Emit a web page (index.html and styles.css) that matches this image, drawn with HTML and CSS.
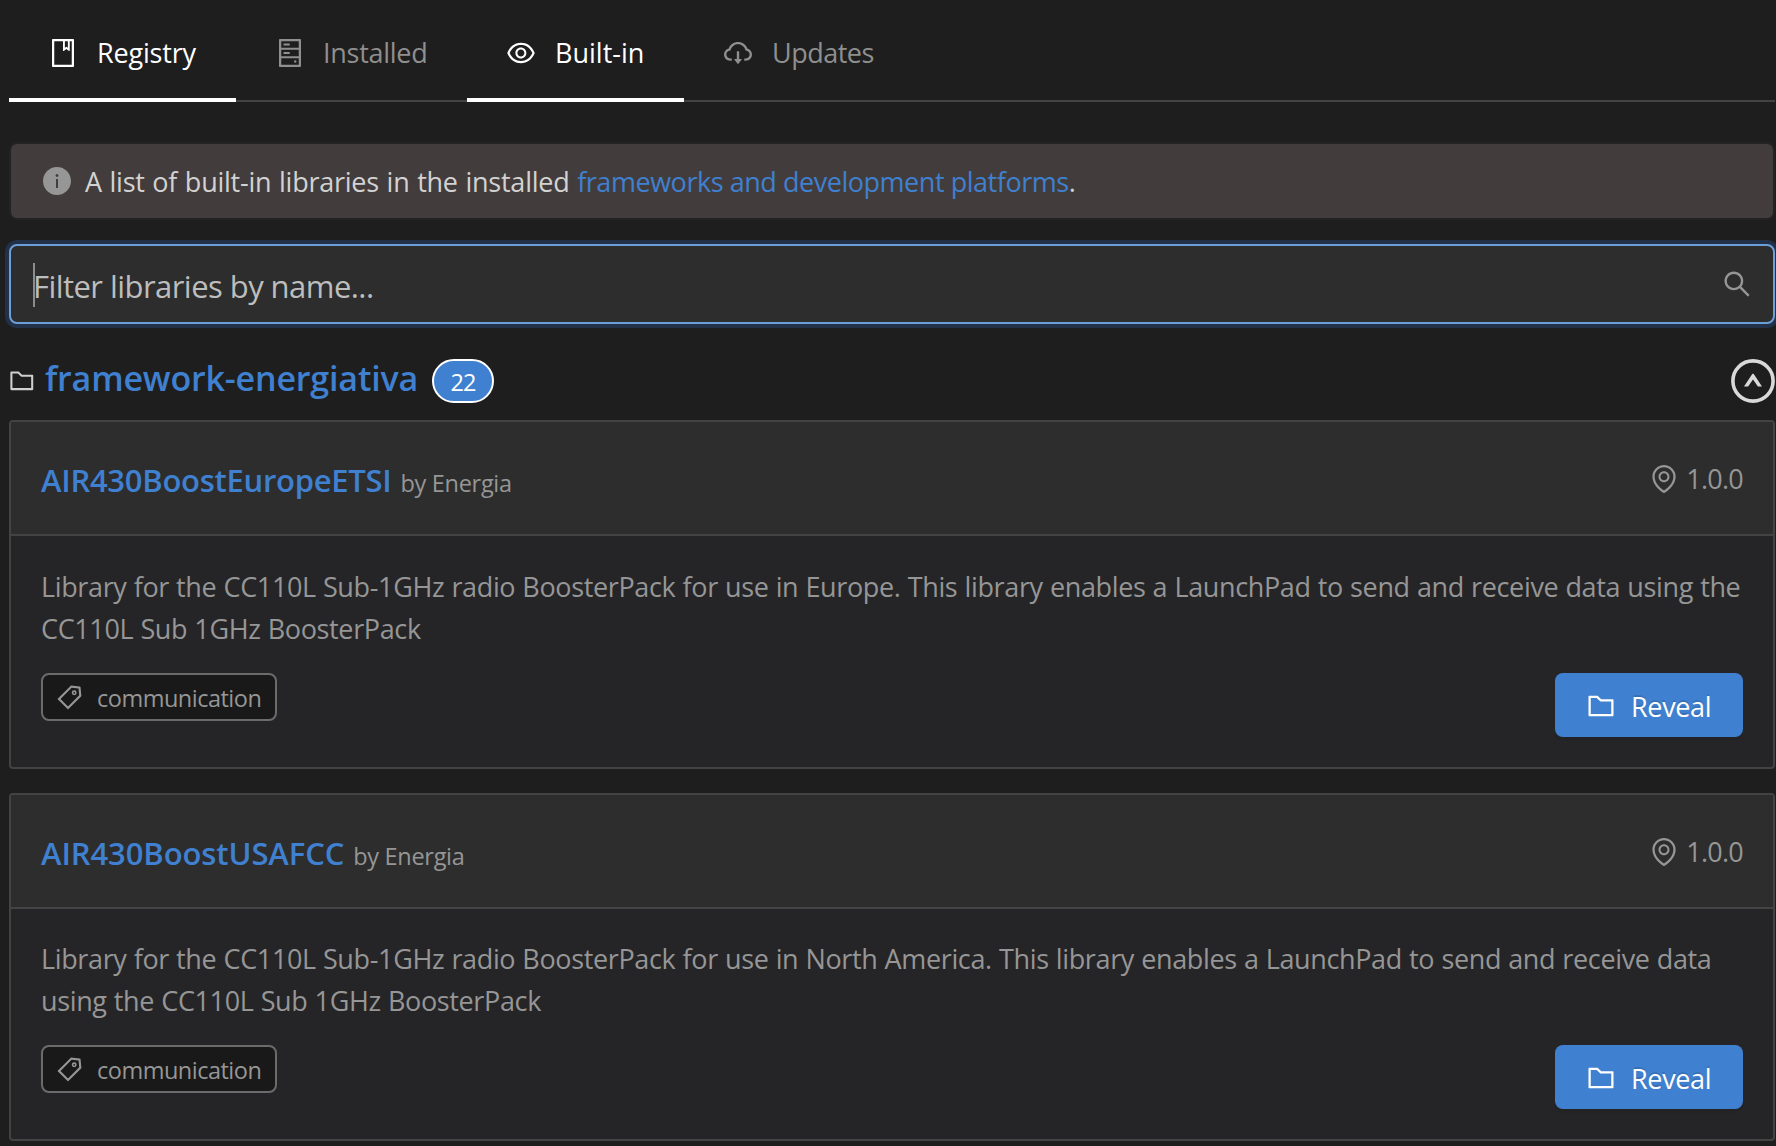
FILE: index.html
```
<!DOCTYPE html>
<html lang="en">
<head>
<meta charset="utf-8">
<title>Libraries</title>
<link rel="stylesheet" href="styles.css">
</head>
<body>
<svg class="defs" aria-hidden="true">
  <symbol id="book" viewBox="64 64 896 896"><path d="M832 64H192c-17.700 0-32 14.300-32 32v832c0 17.700 14.300 32 32 32h640c17.700 0 32-14.300 32-32V96c0-17.700-14.300-32-32-32zm-260 72h96v209.900L621.500 312 572 347.400V136zm220 752H232V136h280v296.900c0 3.300 1 6.600 3 9.300a15.900 15.900 0 0 0 22.300 3.700l83.800-59.900 81.400 59.400c2.700 2 6 3.100 9.400 3.100 8.800 0 16-7.200 16-16V136h64v752z"/></symbol>
  <symbol id="hdd" viewBox="64 64 896 896"><path d="M832 64H192c-17.700 0-32 14.300-32 32v832c0 17.700 14.300 32 32 32h640c17.700 0 32-14.300 32-32V96c0-17.700-14.300-32-32-32zm-600 72h560v208H232V136zm560 480H232V408h560v208zm0 272H232V680h560v208zM496 208H312c-4.400 0-8 3.600-8 8v48c0 4.400 3.600 8 8 8h184c4.400 0 8-3.600 8-8v-48c0-4.400-3.600-8-8-8zM312 544h184c4.400 0 8-3.600 8-8v-48c0-4.400-3.600-8-8-8H312c-4.400 0-8 3.600-8 8v48c0 4.400 3.600 8 8 8zm328 240a40 40 0 1 0 80 0 40 40 0 1 0-80 0z"/></symbol>
  <symbol id="eye" viewBox="64 64 896 896"><path d="M942.200 486.200C847.400 286.500 704.100 186 512 186c-192.200 0-335.400 100.500-430.200 300.300a60.300 60.300 0 0 0 0 51.500C176.600 737.500 319.900 838 512 838c192.200 0 335.400-100.500 430.200-300.300 7.700-16.200 7.700-35 0-51.500zM512 766c-161.300 0-279.400-81.800-362.700-254C232.600 339.800 350.700 258 512 258c161.300 0 279.400 81.800 362.700 254C791.500 684.200 673.400 766 512 766zm-4-430c-97.200 0-176 78.800-176 176s78.800 176 176 176 176-78.800 176-176-78.800-176-176-176zm0 288c-61.900 0-112-50.100-112-112s50.100-112 112-112 112 50.100 112 112-50.100 112-112 112z"/></symbol>
  <symbol id="cloud" viewBox="64 64 896 896"><path d="M624 706.300h-74.100V464c0-4.400-3.600-8-8-8h-60c-4.400 0-8 3.600-8 8v242.300H400c-6.700 0-10.400 7.700-6.300 12.900l112 141.700a8 8 0 0 0 12.600 0l112-141.700c4.100-5.200.4-12.900-6.300-12.900z"/><path d="M811.400 366.700C765.600 245.900 648.900 160 512.200 160S258.800 245.800 213 366.600C127.300 389.100 64 467.200 64 560c0 110.500 89.500 200 199.900 200H304c4.400 0 8-3.600 8-8v-60c0-4.400-3.600-8-8-8h-40.100c-33.700 0-65.400-13.400-89-37.700-23.500-24.200-36-56.800-34.900-90.600.9-26.400 9.900-51.200 26.200-72.100 16.700-21.300 40.100-36.800 66.100-43.700l37.900-9.900 13.900-36.600c8.600-22.800 20.600-44.100 35.700-63.400a245.600 245.600 0 0 1 52.400-49.900c41.100-28.900 89.500-44.200 140-44.200s98.900 15.300 140 44.200c19.900 14 37.500 30.800 52.400 49.900 15.100 19.300 27.100 40.700 35.700 63.400l13.800 36.500 37.800 10C846.100 454.500 884 503.800 884 560c0 33.100-12.900 64.300-36.300 87.700a123.070 123.070 0 0 1-87.600 36.300H720c-4.400 0-8 3.600-8 8v60c0 4.400 3.600 8 8 8h40.100C870.500 760 960 670.500 960 560c0-92.700-63.100-170.700-148.600-193.300z"/></symbol>
  <symbol id="info" viewBox="64 64 896 896"><path d="M512 64C264.600 64 64 264.600 64 512s200.600 448 448 448 448-200.600 448-448S759.400 64 512 64zm32 664c0 4.400-3.600 8-8 8h-48c-4.400 0-8-3.600-8-8V456c0-4.400 3.600-8 8-8h48c4.400 0 8 3.600 8 8v272zm-32-344a48.010 48.010 0 0 1 0-96 48.010 48.010 0 0 1 0 96z"/></symbol>
  <symbol id="search" viewBox="64 64 896 896"><path d="M909.600 854.500L649.900 594.800C690.200 542.700 712 479 712 412c0-80.200-31.300-155.400-87.900-212.100-56.600-56.700-132-87.900-212.100-87.900s-155.500 31.300-212.100 87.900C143.200 256.500 112 331.800 112 412c0 80.100 31.300 155.500 87.900 212.100C256.500 680.800 331.800 712 412 712c67 0 130.600-21.800 182.700-62l259.700 259.600a8.200 8.200 0 0 0 11.600 0l43.600-43.500a8.200 8.200 0 0 0 0-11.600zM570.400 570.400C528 612.700 471.800 636 412 636s-116-23.300-158.400-65.600C211.300 528 188 471.800 188 412s23.300-116.100 65.600-158.400C296 211.300 352.200 188 412 188s116.100 23.200 158.400 65.600S636 352.200 636 412s-23.300 116.100-65.600 158.400z"/></symbol>
  <symbol id="folder" viewBox="64 64 896 896"><path d="M880 298.400H521L403.700 186.200a8.150 8.150 0 0 0-5.500-2.200H144c-17.700 0-32 14.300-32 32v592c0 17.700 14.300 32 32 32h736c17.700 0 32-14.300 32-32V330.400c0-17.700-14.300-32-32-32zM840 768H184V256h188.500l119.600 114.400H840V768z"/></symbol>
  <symbol id="pin" viewBox="64 64 896 896"><path d="M854.600 289.100a362.490 362.490 0 0 0-79.900-115.700 370.830 370.830 0 0 0-118.200-77.800C610.700 76.600 562.100 67 512 67c-50.100 0-98.700 9.600-144.500 28.500-44.300 18.300-84 44.500-118.200 77.800A363.600 363.600 0 0 0 169.400 289c-19.500 45-29.400 92.800-29.400 142 0 70.600 16.900 140.900 50.100 208.700 26.700 54.500 64 107.600 111 158.100 80.300 86.200 164.500 138.900 188.400 153a43.900 43.900 0 0 0 22.400 6.100c7.800 0 15.500-2 22.400-6.100 23.900-14.100 108.100-66.800 188.400-153 47-50.400 84.300-103.600 111-158.100C867.100 572 884 501.800 884 431.100c0-49.200-9.900-97-29.400-142zM512 880.200c-65.900-41.900-300-207.800-300-449.100 0-77.900 31.100-151.100 87.600-206.300C356.300 169.500 431.700 139 512 139s155.700 30.500 212.400 85.900C780.900 280 812 353.200 812 431.100c0 241.300-234.100 407.200-300 449.100zm0-617.200c-97.200 0-176 78.800-176 176s78.800 176 176 176 176-78.800 176-176-78.800-176-176-176zm79.200 255.200A111.600 111.600 0 0 1 512 551c-29.900 0-58-11.700-79.200-32.800A111.600 111.600 0 0 1 400 439c0-29.900 11.700-58 32.800-79.200A111.600 111.600 0 0 1 512 327c29.900 0 58 11.600 79.200 32.800A111.600 111.600 0 0 1 624 439c0 29.900-11.700 58-32.800 79.200z"/></symbol>
  <symbol id="tag" viewBox="64 64 896 896"><path fill-rule="evenodd" d="M938 458.800l-29.600-312.600c-1.500-16.200-14.400-29-30.600-30.600L565.200 86h-.4c-3.200 0-5.700 1-7.600 2.900L88.900 557.200a9.960 9.960 0 0 0 0 14.100l363.800 363.800c1.900 1.900 4.400 2.900 7.100 2.900s5.200-1 7.100-2.900l468.300-468.300c2-2.100 3-5 2.800-8zM459.700 834.700L189.300 564.300 589 164.600 836 188l23.400 247-399.700 399.700z"/><path fill-rule="evenodd" d="M680 256a88 88 0 1 0 0 176 88 88 0 1 0 0-176zm0 56a32 32 0 1 1 0 64 32 32 0 1 1 0-64z"/></symbol>
  <symbol id="circle-up" viewBox="0 0 44 44"><circle cx="22" cy="22" r="20.100" fill="none" stroke="currentColor" stroke-width="3.600"/><path d="M13 27.500h4.100L22 20.600l4.900 6.900H31l-8.100-12.300c-.4-.6-1.400-.6-1.800 0z"/></symbol>
</svg>

<nav class="tabs">
  <a class="tab tab-registry active"><svg class="icon"><use href="#book"/></svg><span>Registry</span></a>
  <a class="tab tab-installed"><svg class="icon"><use href="#hdd"/></svg><span>Installed</span></a>
  <a class="tab tab-builtin active"><svg class="icon"><use href="#eye"/></svg><span>Built-in</span></a>
  <a class="tab tab-updates"><svg class="icon"><use href="#cloud"/></svg><span>Updates</span></a>
</nav>

<main class="content">
  <div class="alert">
    <svg class="icon"><use href="#info"/></svg>
    <p>A list of built-in libraries in the installed <a class="link">frameworks and development platforms</a>.</p>
  </div>

  <div class="filter">
    <span class="caret"></span>
    <span class="placeholder">Filter libraries by name...</span>
    <svg class="icon"><use href="#search"/></svg>
  </div>

  <div class="group">
    <svg class="group-folder"><use href="#folder"/></svg>
    <h2>framework-energiativa</h2>
    <span class="badge">22</span>
    <svg class="toggle"><use href="#circle-up"/></svg>
  </div>

  <article class="card card-europe">
    <header class="card-head">
      <h3>AIR430BoostEuropeETSI</h3><span class="author">by Energia</span>
      <span class="version"><svg class="icon"><use href="#pin"/></svg><span>1.0.0</span></span>
    </header>
    <div class="card-body">
      <p>Library for the CC110L Sub-1GHz radio BoosterPack for use in Europe. This library enables a LaunchPad to send and receive data using the CC110L Sub 1GHz BoosterPack</p>
      <div class="card-actions">
        <span class="keyword"><svg><use href="#tag"/></svg><span>communication</span></span>
        <button class="reveal"><svg class="icon"><use href="#folder"/></svg><span>Reveal</span></button>
      </div>
    </div>
  </article>

  <article class="card card-usa">
    <header class="card-head">
      <h3>AIR430BoostUSAFCC</h3><span class="author">by Energia</span>
      <span class="version"><svg class="icon"><use href="#pin"/></svg><span>1.0.0</span></span>
    </header>
    <div class="card-body">
      <p>Library for the CC110L Sub-1GHz radio BoosterPack for use in North America. This library enables a LaunchPad to send and receive data using the CC110L Sub 1GHz BoosterPack</p>
      <div class="card-actions">
        <span class="keyword"><svg><use href="#tag"/></svg><span>communication</span></span>
        <button class="reveal"><svg class="icon"><use href="#folder"/></svg><span>Reveal</span></button>
      </div>
    </div>
  </article>
</main>
</body>
</html>
```
FILE: styles.css
```
* { box-sizing: border-box; margin: 0; }

body {
  height: 1146px;
  overflow: hidden;
  background: #1e1e1e;
  color: #969696;
  font: 27px/42px "Open Sans", "Noto Sans", sans-serif;
  font-kerning: normal;
}

svg { display: block; flex: none; fill: currentColor; }
.defs { position: absolute; width: 0; height: 0; }
.icon { width: 28px; height: 28px; }

.tabs {
  display: flex;
  height: 102px;
  margin-left: 9px;
  margin-right: 1px;
  box-shadow: inset 0 -2px #434343;
}
.tab {
  display: flex;
  gap: 20px;
  height: 102px;
  padding: 32px 0 0 40px;
  color: #8f8f8f;
  white-space: nowrap;
}
.tab .icon { margin-top: 7px; }
.tab.active { color: #fff; box-shadow: inset 0 -4px #fff; }
.tab-registry { width: 227px; letter-spacing: -0.18px; }
.tab-installed { width: 231px; gap: 19px; letter-spacing: -0.28px; }
.tab-builtin { width: 217px; letter-spacing: 0; }
.tab-updates { letter-spacing: -0.5px; }

.content { padding: 40px 1px 0 9px; }

.alert {
  display: flex;
  align-items: center;
  gap: 14px;
  height: 78px;
  padding-left: 32px;
  border: 2px solid #242323;
  border-radius: 8px;
  background: #423d3c;
}
.alert p { padding-top: 2px; color: #d3d2d2; letter-spacing: -0.24px; word-spacing: 0.9px; white-space: nowrap; }
.link { color: #4080d0; letter-spacing: -0.46px; word-spacing: 0; }

.filter {
  position: relative;
  display: flex;
  align-items: center;
  height: 80px;
  margin-top: 24px;
  padding: 0 22px;
  border: 2px solid #6a9fd9;
  border-radius: 8px;
  background: #2d2d2d;
  box-shadow: 0 0 0 4px #223147;
}
.caret { position: absolute; left: 22px; top: 17px; width: 2px; height: 44px; background: #8c8c8c; }
.placeholder { flex: 1; padding-top: 4px; color: #bdbdbd; font-size: 31px; letter-spacing: -0.55px; }

.group { display: flex; align-items: center; height: 44px; margin: 35px 0 17px; }
.group-folder { width: 25.600px; height: 25.600px; color: #d0d0d0; }
.group h2 {
  margin: -7px 0 0 10.400px;
  color: #4080d0;
  font-size: 34px;
  font-weight: 600;
  letter-spacing: -0.17px;
}
.badge {
  width: 62px;
  height: 44px;
  margin-left: 14px;
  border: 2px solid #fff;
  border-radius: 22px;
  background: #4080d0;
  color: #fff;
  font-size: 23.5px;
  line-height: 42px;
  letter-spacing: -0.8px;
  text-align: center;
}
.toggle { width: 44px; height: 44px; margin: -1px 0 0 auto; color: #d9d9d9; }

.card { border: 2px solid #434343; border-radius: 4px; background: #252527; }
.card + .card { margin-top: 24px; }
.card-head {
  display: flex;
  align-items: baseline;
  height: 114px;
  padding: 37px 30px 0 30px;
  border-bottom: 2px solid #434343;
  border-radius: 2px 2px 0 0;
  background: #2d2d2d;
}
.card h3 { color: #4080d0; font-size: 31px; font-weight: 600; letter-spacing: -0.28px; }
.card-usa h3 { letter-spacing: -0.1px; }
.author { margin-left: 9px; font-size: 23.5px; letter-spacing: -0.3px; }
.version { display: flex; align-self: flex-start; align-items: center; gap: 8px; margin: -1px 0 0 auto; letter-spacing: -0.75px; }

.card-body { padding: 30px 30px 30px; letter-spacing: -0.36px; word-spacing: 0.500px; }
.card-usa .card-body { padding-top: 29px; }
.card-body p { margin-right: -10px; }
.card-actions { display: flex; justify-content: space-between; margin-top: 23px; word-spacing: 0; }
.keyword {
  display: flex;
  gap: 15px;
  width: 236px;
  height: 48px;
  padding: 0 0 0 14px;
  border: 2px solid #6b6b6b;
  border-radius: 8px;
  background: #191919;
  font-size: 23.5px;
  line-height: 47px;
  letter-spacing: -0.5px;
}
.keyword svg { width: 25px; height: 25px; margin-top: 10px; }
.reveal {
  display: flex;
  gap: 16px;
  width: 188px;
  height: 64px;
  padding: 13px 0 0 32px;
  border: 0;
  border-radius: 8px;
  background: #4080d0;
  box-shadow: 0 4px 0 rgba(0, 0, 0, 0.045);
  color: #fff;
  font: inherit;
  letter-spacing: -0.35px;
  text-shadow: 0 -2px 0 rgba(0, 0, 0, 0.12);
}
.reveal .icon { margin-top: 6px; }
```
